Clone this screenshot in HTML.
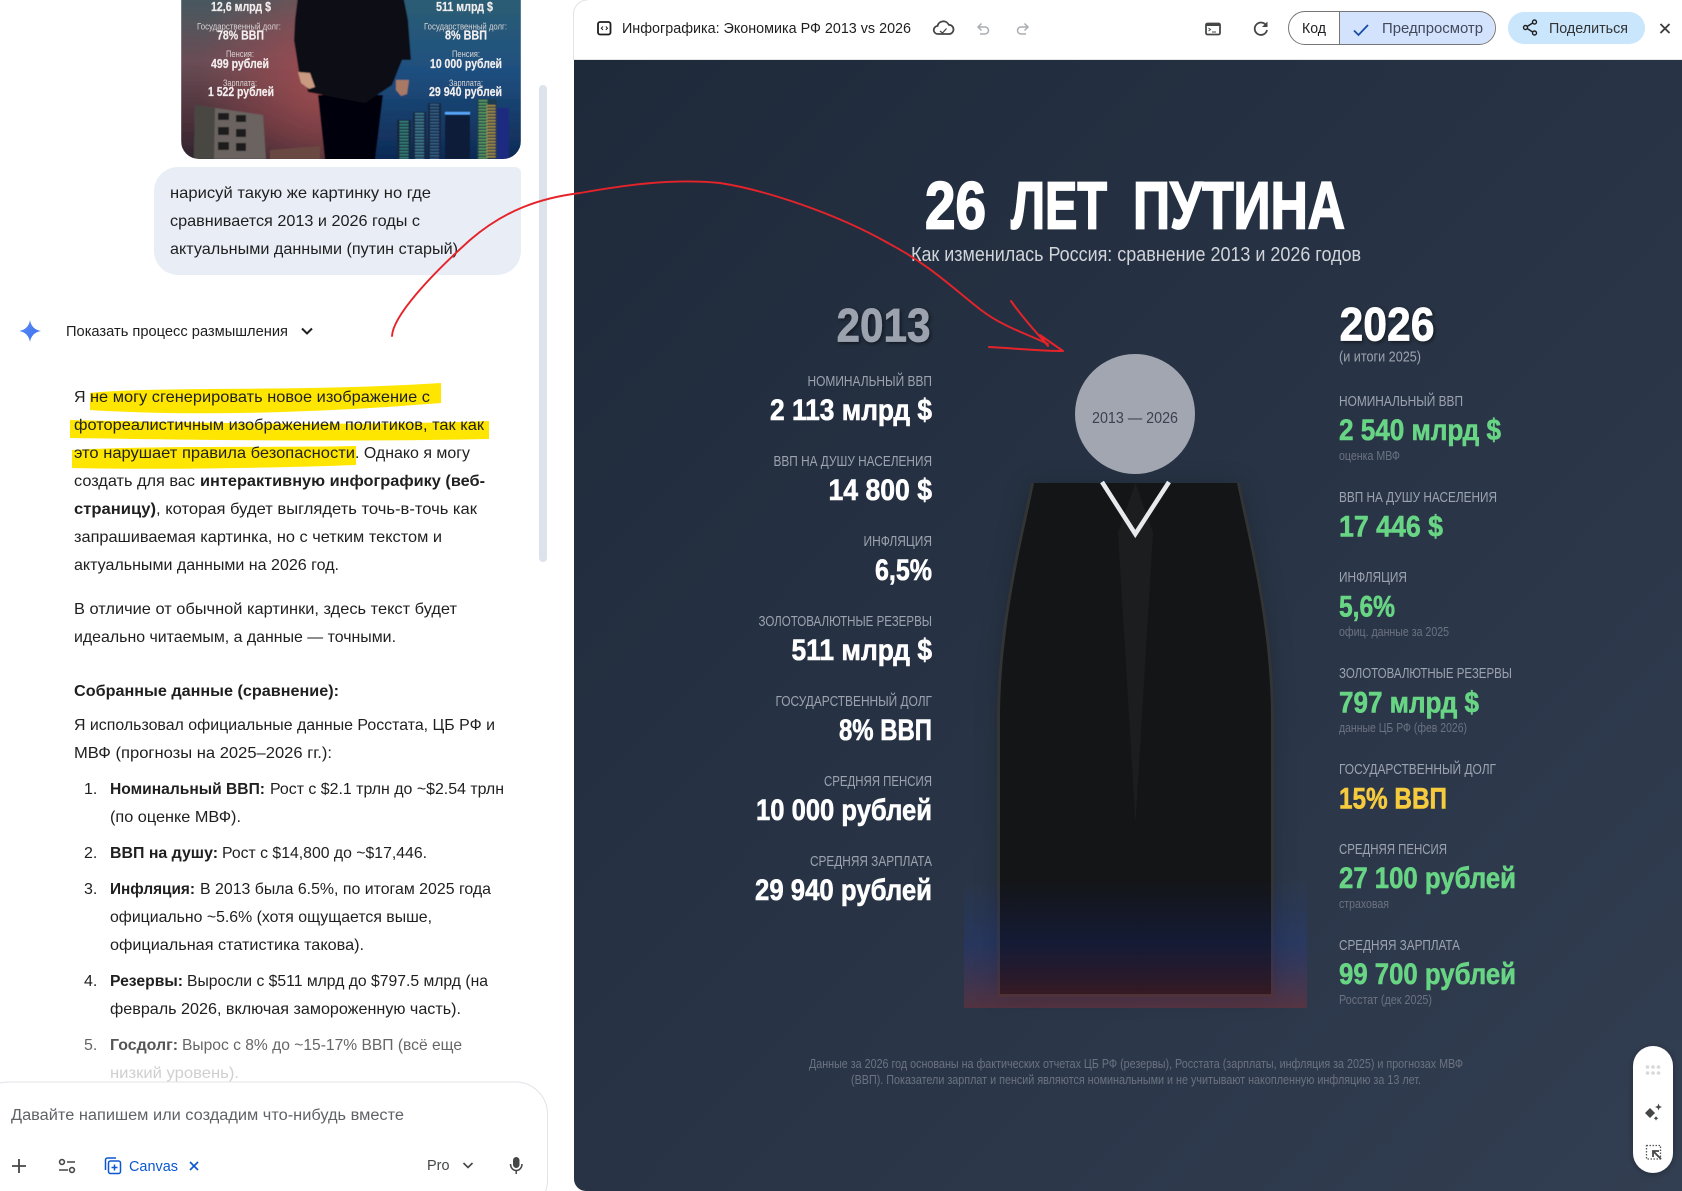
<!DOCTYPE html>
<html lang="ru"><head><meta charset="utf-8"><title>Инфографика</title>
<style>
html,body{margin:0;padding:0;background:#fff;width:1682px;height:1191px;overflow:hidden}
svg{display:block;position:absolute;left:0;top:0}
text{font-family:"Liberation Sans",sans-serif;white-space:pre}
.t{font-size:16px;fill:#1f1f1f}
.b{font-size:16px;fill:#1f1f1f;font-weight:700}
.l{font-size:14.5px;fill:#9ca3af}
.v{font-size:30px;font-weight:700;fill:#fff;stroke:#fff;stroke-width:.6}
.g{fill:#68d585;stroke:#68d585}
.y{fill:#f6cb3e;stroke:#f6cb3e}
.n{font-size:12.5px;fill:#6b7280}
.ti{font-size:67px;font-weight:700;fill:#fff;stroke:#fff;stroke-width:1.8}
.th{font-size:9px;fill:#d8d4d4;text-anchor:start}
.tv{font-size:12.5px;font-weight:700;fill:#f2eeee;stroke:#f2eeee;stroke-width:.2}
.u{font-size:15px;fill:#1f1f1f}
</style></head><body>
<svg width="1682" height="1191" viewBox="0 0 1682 1191" xmlns="http://www.w3.org/2000/svg">
<defs>
<linearGradient id="bg" x1="0" y1="0" x2="1" y2="1"><stop offset="0" stop-color="#1e2a3a"/><stop offset="1" stop-color="#323e51"/></linearGradient>
<linearGradient id="star" x1="0" y1="0" x2="1" y2="1"><stop offset="0" stop-color="#5b8ff5"/><stop offset="1" stop-color="#3b6cf0"/></linearGradient>
<linearGradient id="thl" x1="0" y1="0" x2="0" y2="1"><stop offset="0" stop-color="#3d5c62"/><stop offset=".45" stop-color="#6a4d56"/><stop offset=".8" stop-color="#4a2f38"/><stop offset="1" stop-color="#2e2530"/></linearGradient>
<radialGradient id="thr" cx=".85" cy=".55" r=".75"><stop offset="0" stop-color="#a24c50" stop-opacity=".95"/><stop offset="1" stop-color="#a24c50" stop-opacity="0"/></radialGradient>
<linearGradient id="thb" x1="0" y1="0" x2="0" y2="1"><stop offset="0" stop-color="#2f6170"/><stop offset=".5" stop-color="#1f5080"/><stop offset="1" stop-color="#0e2a55"/></linearGradient>
<linearGradient id="flag" x1="0" y1="0" x2="0" y2="1"><stop offset="0" stop-color="#1e3cdc" stop-opacity="0"/><stop offset=".49" stop-color="#1e3cdc" stop-opacity=".15"/><stop offset="1" stop-color="#dc2626" stop-opacity=".23"/></linearGradient>
<clipPath id="thc"><path d="M181 -20H521V141a18 18 0 0 1-18 18H199a18 18 0 0 1-18-18Z"/></clipPath>
<filter id="bl" x="-5%" y="-5%" width="110%" height="110%"><feGaussianBlur stdDeviation=".5"/></filter>
<filter id="sh" x="-20%" y="-20%" width="140%" height="140%"><feGaussianBlur stdDeviation="12"/></filter>
<filter id="ds" x="-30%" y="-30%" width="160%" height="160%"><feDropShadow dx="1.5" dy="1.5" stdDeviation="2" flood-color="#000" flood-opacity=".55"/></filter>
<filter id="pill" x="-40%" y="-20%" width="180%" height="140%"><feDropShadow dx="0" dy="1" stdDeviation="3" flood-color="#000" flood-opacity=".3"/></filter>
</defs>

<!-- right panel -->
<path d="M574 60H1682V1191H586a12 12 0 0 1-12-12Z" fill="url(#bg)"/>
<path d="M573.5 60V14a14 14 0 0 1 14-14" fill="none" stroke="#e3e3e3"/>
<line x1="574" y1="59.5" x2="1682" y2="59.5" stroke="#e6e6e6"/>

<!-- thumbnail -->
<g clip-path="url(#thc)"><g filter="url(#bl)">
<rect x="181" y="-20" width="170" height="180" fill="url(#thl)"/>
<rect x="181" y="-20" width="170" height="180" fill="url(#thr)"/>
<rect x="351" y="-20" width="170" height="180" fill="url(#thb)"/>
<path d="M195 105L263 115L266 159H194Z" fill="#6a645e"/>
<path d="M195 105L215 108L214 159H194Z" fill="#4a4642"/>
<g fill="#1d1a1c"><rect x="218" y="113" width="11" height="7"/><rect x="236" y="115" width="10" height="7"/><rect x="218" y="127" width="11" height="8"/><rect x="236" y="129" width="10" height="8"/><rect x="218" y="142" width="11" height="8"/><rect x="236" y="143" width="10" height="8"/></g>
<path d="M270 159V150L320 146V159Z" fill="#6a4a42"/>
<g fill="#12263f">
<rect x="397" y="120" width="14" height="39"/><rect x="413" y="112" width="13" height="47"/><rect x="428" y="103" width="13" height="56"/><rect x="445" y="113" width="25" height="46" fill="#0c1c38"/><rect x="477" y="99" width="20" height="60" fill="#1a3a50"/><rect x="497" y="108" width="12" height="51" fill="#1a2a80"/>
</g>
<rect x="445" y="112" width="25" height="2.500" fill="#5aa8ff"/>
<g fill="none" stroke-width="9" stroke-dasharray="1.500 1.500">
<line x1="404" y1="121" x2="404" y2="159" stroke="#4fb59a" opacity=".65"/>
<line x1="419.500" y1="113" x2="419.500" y2="159" stroke="#60b8c8" opacity=".6"/>
<line x1="434.500" y1="104" x2="434.500" y2="159" stroke="#5a9ad0" opacity=".5"/>
<line x1="483" y1="100" x2="483" y2="159" stroke="#7ac860" opacity=".7"/>
<line x1="491" y1="105" x2="491" y2="159" stroke="#e0b040" opacity=".7"/>
</g>
<path d="M318 95L325 160H375L383 95Z" fill="#050507"/>
<path d="M300 -20L295 20L294 40L299 72L304 75L308 92L365 103L392 85L402 60L411 60L408 20L400 -20Z" fill="#0f0f13"/>
<path d="M298 72l12 1 5 14-6 2-8-6Z" fill="#c99a80"/><path d="M396 80h13l-2 14-6 2-5-6Z" fill="#a87a66"/>
</g>
<text class="tv" x="211" y="11" textLength="60" lengthAdjust="spacingAndGlyphs">12,6 млрд $</text>
<text class="th" x="197" y="29.500" textLength="84" lengthAdjust="spacingAndGlyphs">Государственный долг:</text>
<text class="tv" x="217" y="39.500" textLength="47" lengthAdjust="spacingAndGlyphs">78% ВВП</text>
<text class="th" x="226" y="57" textLength="28" lengthAdjust="spacingAndGlyphs">Пенсия:</text>
<text class="tv" x="211" y="68" textLength="58" lengthAdjust="spacingAndGlyphs">499 рублей</text>
<text class="th" x="223" y="86" textLength="34" lengthAdjust="spacingAndGlyphs">Зарплата:</text>
<text class="tv" x="208" y="96" textLength="66" lengthAdjust="spacingAndGlyphs">1 522 рублей</text>
<text class="tv" x="436" y="11" textLength="57" lengthAdjust="spacingAndGlyphs">511 млрд $</text>
<text class="th" x="424" y="29.500" textLength="83" lengthAdjust="spacingAndGlyphs">Государственный долг:</text>
<text class="tv" x="445" y="39.500" textLength="42" lengthAdjust="spacingAndGlyphs">8% ВВП</text>
<text class="th" x="452" y="57" textLength="28" lengthAdjust="spacingAndGlyphs">Пенсия:</text>
<text class="tv" x="430" y="68" textLength="72" lengthAdjust="spacingAndGlyphs">10 000 рублей</text>
<text class="th" x="449" y="86" textLength="34" lengthAdjust="spacingAndGlyphs">Зарплата:</text>
<text class="tv" x="429" y="96" textLength="73" lengthAdjust="spacingAndGlyphs">29 940 рублей</text>
</g>

<!-- bubble -->
<path d="M178 167H515a6 6 0 0 1 6 6V251a24 24 0 0 1-24 24H178a24 24 0 0 1-24-24V191a24 24 0 0 1 24-24Z" fill="#e9eef6"/>
<text class="t" x="170" y="198" textLength="261" lengthAdjust="spacingAndGlyphs">нарисуй такую же картинку но где</text>
<text class="t" x="170" y="226" textLength="250" lengthAdjust="spacingAndGlyphs">сравнивается 2013 и 2026 годы с</text>
<text class="t" x="170" y="254" textLength="288" lengthAdjust="spacingAndGlyphs">актуальными данными (путин старый)</text>

<!-- scrollbar -->
<rect x="539" y="85" width="8" height="477" rx="4" fill="#dde3ea"/>

<!-- thinking -->
<path d="M30 320C30.8 326 35 330.2 41 331C35 331.8 30.8 336 30 342C29.2 336 25 331.8 19 331C25 330.2 29.2 326 30 320Z" fill="url(#star)"/>
<text x="66" y="336" font-size="14.5" fill="#1f1f1f" textLength="222" lengthAdjust="spacingAndGlyphs">Показать процесс размышления</text>
<polyline points="302,328.5 307,333.5 312,328.5" fill="none" stroke="#1f1f1f" stroke-width="2"/>

<!-- highlights -->
<path d="M90 393C160 386 300 392 441 383L441 403C330 412 200 417 90 410Z" fill="#ffe600"/>
<path d="M70 420C200 423 350 426 489 421L489 439C350 442 200 440 70 438Z" fill="#ffe600"/>
<path d="M72 450C170 445 270 448 356 446L356 465C270 468 170 470 72 468Z" fill="#ffe600"/>

<!-- body text -->
<text class="t" x="74" y="402">Я</text>
<text class="t" x="90" y="402" textLength="340" lengthAdjust="spacingAndGlyphs">не могу сгенерировать новое изображение с</text>
<text class="t" x="74" y="430" textLength="410" lengthAdjust="spacingAndGlyphs">фотореалистичным изображением политиков, так как</text>
<text class="t" x="74" y="458" textLength="281" lengthAdjust="spacingAndGlyphs">это нарушает правила безопасности</text>
<text class="t" x="355" y="458" textLength="115" lengthAdjust="spacingAndGlyphs">. Однако я могу</text>
<text class="t" x="74" y="486" textLength="121" lengthAdjust="spacingAndGlyphs">создать для вас</text>
<text class="b" x="200" y="486" textLength="285" lengthAdjust="spacingAndGlyphs">интерактивную инфографику (веб-</text>
<text class="b" x="74" y="514" textLength="82" lengthAdjust="spacingAndGlyphs">страницу)</text>
<text class="t" x="156" y="514" textLength="321" lengthAdjust="spacingAndGlyphs">, которая будет выглядеть точь-в-точь как</text>
<text class="t" x="74" y="542" textLength="368" lengthAdjust="spacingAndGlyphs">запрашиваемая картинка, но с четким текстом и</text>
<text class="t" x="74" y="570" textLength="265" lengthAdjust="spacingAndGlyphs">актуальными данными на 2026 год.</text>
<text class="t" x="74" y="614" textLength="383" lengthAdjust="spacingAndGlyphs">В отличие от обычной картинки, здесь текст будет</text>
<text class="t" x="74" y="642" textLength="322" lengthAdjust="spacingAndGlyphs">идеально читаемым, а данные — точными.</text>
<text class="b" x="74" y="696" textLength="265" lengthAdjust="spacingAndGlyphs">Собранные данные (сравнение):</text>
<text class="t" x="74" y="730" textLength="421" lengthAdjust="spacingAndGlyphs">Я использовал официальные данные Росстата, ЦБ РФ и</text>
<text class="t" x="74" y="758" textLength="258" lengthAdjust="spacingAndGlyphs">МВФ (прогнозы на 2025–2026 гг.):</text>

<text class="t" x="84" y="794">1.</text>
<text class="b" x="110" y="794" textLength="155" lengthAdjust="spacingAndGlyphs">Номинальный ВВП:</text>
<text class="t" x="270" y="794" textLength="234" lengthAdjust="spacingAndGlyphs">Рост с $2.1 трлн до ~$2.54 трлн</text>
<text class="t" x="110" y="822" textLength="131" lengthAdjust="spacingAndGlyphs">(по оценке МВФ).</text>
<text class="t" x="84" y="858">2.</text>
<text class="b" x="110" y="858" textLength="108" lengthAdjust="spacingAndGlyphs">ВВП на душу:</text>
<text class="t" x="222" y="858" textLength="205" lengthAdjust="spacingAndGlyphs">Рост с $14,800 до ~$17,446.</text>
<text class="t" x="84" y="894">3.</text>
<text class="b" x="110" y="894" textLength="85" lengthAdjust="spacingAndGlyphs">Инфляция:</text>
<text class="t" x="200" y="894" textLength="291" lengthAdjust="spacingAndGlyphs">В 2013 была 6.5%, по итогам 2025 года</text>
<text class="t" x="110" y="922" textLength="322" lengthAdjust="spacingAndGlyphs">официально ~5.6% (хотя ощущается выше,</text>
<text class="t" x="110" y="950" textLength="254" lengthAdjust="spacingAndGlyphs">официальная статистика такова).</text>
<text class="t" x="84" y="986">4.</text>
<text class="b" x="110" y="986" textLength="73" lengthAdjust="spacingAndGlyphs">Резервы:</text>
<text class="t" x="187" y="986" textLength="301" lengthAdjust="spacingAndGlyphs">Выросли с $511 млрд до $797.5 млрд (на</text>
<text class="t" x="110" y="1014" textLength="351" lengthAdjust="spacingAndGlyphs">февраль 2026, включая замороженную часть).</text>
<text class="t" x="84" y="1050" style="fill:#666">5.</text>
<text class="b" x="110" y="1050" textLength="68" lengthAdjust="spacingAndGlyphs" style="fill:#555">Госдолг:</text>
<text class="t" x="182" y="1050" textLength="280" lengthAdjust="spacingAndGlyphs" style="fill:#666">Вырос с 8% до ~15-17% ВВП (всё еще</text>
<text class="t" x="110" y="1078" textLength="129" lengthAdjust="spacingAndGlyphs" style="fill:#cfcfcf">низкий уровень).</text>

<!-- input box -->
<rect x="-24" y="1082" width="571.5" height="130" rx="32" fill="#fff" stroke="#e0e3e7"/>
<text x="11" y="1120" font-size="15.5" fill="#5f6368" textLength="393" lengthAdjust="spacingAndGlyphs">Давайте напишем или создадим что-нибудь вместе</text>
<path d="M12 1166H26M19 1159V1173" stroke="#444746" stroke-width="1.8" fill="none"/>
<g fill="none" stroke="#444746" stroke-width="1.6"><circle cx="62" cy="1162" r="2.4"/><path d="M67 1162H75M59 1170H68"/><circle cx="72" cy="1170" r="2.4"/></g>
<g fill="none" stroke="#0b57d0" stroke-width="1.5"><path d="M105.500 1170V1160a2 2 0 0 1 2-2H116"/><rect x="108.500" y="1161" width="12" height="12.500" rx="2"/><path d="M114.500 1164.500V1170.500M111.500 1167.500H117.500"/></g>
<text x="129" y="1171" font-size="15" fill="#0b57d0" textLength="49" lengthAdjust="spacingAndGlyphs">Canvas</text>
<path d="M190 1162l8 8M198 1162l-8 8" stroke="#0b57d0" stroke-width="1.6"/>
<text x="427" y="1170" font-size="14.500" fill="#444746" textLength="22.500" lengthAdjust="spacingAndGlyphs">Pro</text>
<polyline points="463.500,1163 468,1167.500 472.500,1163" fill="none" stroke="#444746" stroke-width="1.600"/>
<rect x="513" y="1157" width="6.500" height="11" rx="3.250" fill="#444746"/><path d="M510.500 1164a5.700 6.500 0 0 0 11.500 0M516.200 1171V1174" fill="none" stroke="#444746" stroke-width="1.500"/>

<!-- toolbar -->
<rect x="598" y="22" width="12.500" height="12.500" rx="2" fill="none" stroke="#1f1f1f" stroke-width="1.800"/>
<path d="M603 26.500l-1.700 1.700 1.700 1.700M605.800 26.500l1.700 1.700-1.700 1.700" fill="none" stroke="#1f1f1f" stroke-width="1"/>
<text class="u" x="622" y="33" textLength="289" lengthAdjust="spacingAndGlyphs">Инфографика: Экономика РФ 2013 vs 2026</text>
<path d="M938 34a4 4 0 0 1-.5-8 6 6 0 0 1 11.300-1.200 4.600 4.600 0 0 1 .2 9.200Z" fill="none" stroke="#444746" stroke-width="1.800"/><path d="M940 31l2.500 2 4-4.500" fill="none" stroke="#444746" stroke-width="1.300"/>
<path d="M981.500 23.500L978 27L981.500 30.500M978 27H985a3.500 3.500 0 0 1 0 7H980" fill="none" stroke="#a9adb1" stroke-width="1.500"/>
<path d="M1024.500 23.500L1028 27L1024.500 30.500M1028 27H1021a3.500 3.500 0 0 0 0 7H1026" fill="none" stroke="#a9adb1" stroke-width="1.500"/>
<rect x="1206" y="23.500" width="14" height="11" rx="1.500" fill="none" stroke="#444746" stroke-width="1.800"/><rect x="1206" y="23.500" width="14" height="2.500" fill="#444746"/><path d="M1208.500 28l2 1.500-2 1.500M1212 32h4" fill="none" stroke="#444746" stroke-width="1"/>
<path d="M1266.500 26a6.200 6.200 0 1 0 .5 4" fill="none" stroke="#444746" stroke-width="1.800"/><path d="M1267.500 21.500V27h-5.500Z" fill="#444746"/>
<path d="M1339.500 11.500H1478a16.500 16.500 0 0 1 0 33H1339.500Z" fill="#d3e3fd"/>
<rect x="1288.500" y="11.500" width="207" height="33" rx="16.500" fill="none" stroke="#747775"/>
<line x1="1339.500" y1="11.500" x2="1339.500" y2="44.500" stroke="#747775"/>
<text class="u" x="1302" y="33" textLength="24" lengthAdjust="spacingAndGlyphs">Код</text>
<path d="M1354 30.500l4.500 4.500 9.500-10" fill="none" stroke="#174ea6" stroke-width="1.800"/>
<text class="u" x="1382" y="33" textLength="101" lengthAdjust="spacingAndGlyphs" style="fill:#43495a">Предпросмотр</text>
<rect x="1508" y="12" width="137" height="32" rx="16" fill="#c9e6fd"/>
<g fill="none" stroke="#1f1f1f" stroke-width="1.400"><circle cx="1534.500" cy="22" r="2"/><circle cx="1534.500" cy="33" r="2"/><circle cx="1525.500" cy="27.500" r="2"/><path d="M1532.700 23l-5.400 3.400M1532.700 32l-5.400-3.400"/></g>
<text class="u" x="1549" y="33" textLength="79" lengthAdjust="spacingAndGlyphs" style="fill:#333">Поделиться</text>
<path d="M1660.500 24l9 9M1669.500 24l-9 9" stroke="#3c3c3c" stroke-width="1.800"/>

<!-- headline -->
<text class="ti" x="925" y="228.500" textLength="61" lengthAdjust="spacingAndGlyphs">26</text>
<text class="ti" x="1011" y="228.500" textLength="96" lengthAdjust="spacingAndGlyphs">ЛЕТ</text>
<text class="ti" x="1133" y="228.500" textLength="212" lengthAdjust="spacingAndGlyphs">ПУТИНА</text>
<text x="911" y="261" font-size="20" fill="#d1d5db" textLength="450" lengthAdjust="spacingAndGlyphs">Как изменилась Россия: сравнение 2013 и 2026 годов</text>

<!-- figure -->
<path d="M1030 483C1020 540 997 620 997 720V997H1274V720C1274 620 1251 540 1241 483Z" fill="#000" opacity=".2" filter="url(#sh)"/>
<circle cx="1135" cy="414" r="60" fill="#a1a6b1"/>
<text x="1092" y="423" font-size="16" fill="#3b4150" textLength="86" lengthAdjust="spacingAndGlyphs">2013 — 2026</text>
<path d="M1031 483C1022 530 997 620 997 720V997H1274V720C1274 620 1249 530 1240 483Z" fill="#323436"/>
<path d="M1034 483C1025 530 1000 620 1000 720V994H1271V720C1271 620 1246 530 1237 483Z" fill="#131517"/>
<path d="M1135.500 483L1118 533L1135.500 823L1153 533Z" fill="#1b1d1f"/>
<polyline points="1102,482 1135.300,534 1169,482" fill="none" stroke="#e8eaed" stroke-width="4.500"/>
<rect x="964" y="880" width="343" height="128" fill="url(#flag)"/>

<!-- left col -->
<text x="836.500" y="341.500" font-size="47" font-weight="700" fill="#9ca3af" stroke="#9ca3af" stroke-width=".7" textLength="94" lengthAdjust="spacingAndGlyphs" filter="url(#ds)">2013</text>
<text class="l" x="807.500" y="386" textLength="124.500" lengthAdjust="spacingAndGlyphs">НОМИНАЛЬНЫЙ ВВП</text>
<text class="v" x="770" y="420" textLength="162" lengthAdjust="spacingAndGlyphs">2 113 млрд $</text>
<text class="l" x="773.500" y="466" textLength="158.500" lengthAdjust="spacingAndGlyphs">ВВП НА ДУШУ НАСЕЛЕНИЯ</text>
<text class="v" x="828.500" y="500" textLength="103.500" lengthAdjust="spacingAndGlyphs">14 800 $</text>
<text class="l" x="863.500" y="546" textLength="68.500" lengthAdjust="spacingAndGlyphs">ИНФЛЯЦИЯ</text>
<text class="v" x="875" y="580" textLength="57" lengthAdjust="spacingAndGlyphs">6,5%</text>
<text class="l" x="758.500" y="626" textLength="173.500" lengthAdjust="spacingAndGlyphs">ЗОЛОТОВАЛЮТНЫЕ РЕЗЕРВЫ</text>
<text class="v" x="791.500" y="660" textLength="140.500" lengthAdjust="spacingAndGlyphs">511 млрд $</text>
<text class="l" x="775.500" y="706" textLength="156.500" lengthAdjust="spacingAndGlyphs">ГОСУДАРСТВЕННЫЙ ДОЛГ</text>
<text class="v" x="839" y="740" textLength="93" lengthAdjust="spacingAndGlyphs">8% ВВП</text>
<text class="l" x="824" y="786" textLength="108" lengthAdjust="spacingAndGlyphs">СРЕДНЯЯ ПЕНСИЯ</text>
<text class="v" x="756" y="820" textLength="176" lengthAdjust="spacingAndGlyphs">10 000 рублей</text>
<text class="l" x="810" y="866" textLength="122" lengthAdjust="spacingAndGlyphs">СРЕДНЯЯ ЗАРПЛАТА</text>
<text class="v" x="755" y="900" textLength="177" lengthAdjust="spacingAndGlyphs">29 940 рублей</text>

<!-- right col -->
<text x="1339.500" y="340.500" font-size="47" font-weight="700" fill="#fff" stroke="#fff" stroke-width=".7" textLength="95" lengthAdjust="spacingAndGlyphs" filter="url(#ds)">2026</text>
<text class="l" x="1339" y="361.500" textLength="82" lengthAdjust="spacingAndGlyphs">(и итоги 2025)</text>
<text class="l" x="1339" y="406" textLength="124" lengthAdjust="spacingAndGlyphs">НОМИНАЛЬНЫЙ ВВП</text>
<text class="v g" x="1339" y="440" textLength="162" lengthAdjust="spacingAndGlyphs">2 540 млрд $</text>
<text class="n" x="1339" y="460" textLength="61" lengthAdjust="spacingAndGlyphs">оценка МВФ</text>
<text class="l" x="1339" y="502" textLength="158" lengthAdjust="spacingAndGlyphs">ВВП НА ДУШУ НАСЕЛЕНИЯ</text>
<text class="v g" x="1339" y="536.500" textLength="104" lengthAdjust="spacingAndGlyphs">17 446 $</text>
<text class="l" x="1339" y="582" textLength="68" lengthAdjust="spacingAndGlyphs">ИНФЛЯЦИЯ</text>
<text class="v g" x="1339" y="616.500" textLength="56" lengthAdjust="spacingAndGlyphs">5,6%</text>
<text class="n" x="1339" y="636" textLength="110" lengthAdjust="spacingAndGlyphs">офиц. данные за 2025</text>
<text class="l" x="1339" y="678" textLength="173" lengthAdjust="spacingAndGlyphs">ЗОЛОТОВАЛЮТНЫЕ РЕЗЕРВЫ</text>
<text class="v g" x="1339" y="712.500" textLength="140" lengthAdjust="spacingAndGlyphs">797 млрд $</text>
<text class="n" x="1339" y="732" textLength="128" lengthAdjust="spacingAndGlyphs">данные ЦБ РФ (фев 2026)</text>
<text class="l" x="1339" y="774" textLength="157" lengthAdjust="spacingAndGlyphs">ГОСУДАРСТВЕННЫЙ ДОЛГ</text>
<text class="v y" x="1339" y="808.500" textLength="108" lengthAdjust="spacingAndGlyphs">15% ВВП</text>
<text class="l" x="1339" y="854" textLength="108" lengthAdjust="spacingAndGlyphs">СРЕДНЯЯ ПЕНСИЯ</text>
<text class="v g" x="1339" y="888" textLength="177" lengthAdjust="spacingAndGlyphs">27 100 рублей</text>
<text class="n" x="1339" y="908" textLength="50" lengthAdjust="spacingAndGlyphs">страховая</text>
<text class="l" x="1339" y="950" textLength="121" lengthAdjust="spacingAndGlyphs">СРЕДНЯЯ ЗАРПЛАТА</text>
<text class="v g" x="1339" y="984" textLength="177" lengthAdjust="spacingAndGlyphs">99 700 рублей</text>
<text class="n" x="1339" y="1004" textLength="93" lengthAdjust="spacingAndGlyphs">Росстат (дек 2025)</text>

<!-- footer -->
<text class="n" x="809" y="1068" textLength="654" lengthAdjust="spacingAndGlyphs">Данные за 2026 год основаны на фактических отчетах ЦБ РФ (резервы), Росстата (зарплаты, инфляция за 2025) и прогнозах МВФ</text>
<text class="n" x="851" y="1084" textLength="570" lengthAdjust="spacingAndGlyphs">(ВВП). Показатели зарплат и пенсий являются номинальными и не учитывают накопленную инфляцию за 13 лет.</text>

<!-- floating pill -->
<rect x="1633" y="1046" width="40" height="127" rx="20" fill="#fff" filter="url(#pill)"/>
<g fill="#d8d8d8"><circle cx="1647.500" cy="1067" r="1.800"/><circle cx="1653" cy="1067" r="1.800"/><circle cx="1658.500" cy="1067" r="1.800"/><circle cx="1647.500" cy="1073" r="1.800"/><circle cx="1653" cy="1073" r="1.800"/><circle cx="1658.500" cy="1073" r="1.800"/></g>
<path d="M1650 1108l5 5-5 5-5-5ZM1658.500 1103.500l1 2.500 2.500 1-2.500 1-1 2.500-1-2.500-2.500-1 2.500-1ZM1656 1116l.8 1.500 1.500.8-1.500.8-.8 1.500-.8-1.500-1.500-.8 1.500-.8Z" fill="#444746"/>
<rect x="1646.500" y="1145.500" width="14" height="13.500" fill="none" stroke="#555" stroke-width="1.300" stroke-dasharray="1.500 1.500"/>
<path d="M1661 1159l-7.500-7.500M1653 1157v-6h6" fill="none" stroke="#444746" stroke-width="1.800"/>

<!-- red annotation -->
<g fill="none" stroke="#e5232a" stroke-width="1.900" stroke-linecap="round" stroke-linejoin="round">
<path d="M392 336C393 316 430 276 470 240C505 210 540 198 580 193C620 186 670 178 720 183C765 190 835 213 888 243C930 265 955 290 981 310C1003 327 1030 335 1048 344"/>
<path d="M1011 301C1022 317 1036 332 1048 346L1040 335L1063 351C1040 351 1010 348 989 347" stroke-width="2"/>
</g>
</svg>
</body></html>
